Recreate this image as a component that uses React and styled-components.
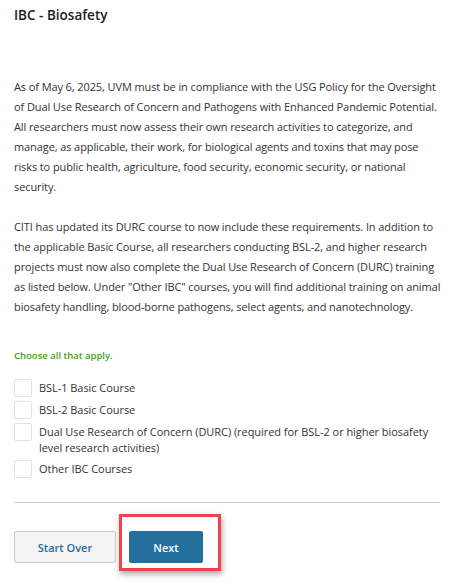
import React from 'react';
import styled, { createGlobalStyle } from 'styled-components';

const GlobalStyle = createGlobalStyle`
    body {
        margin: 0;
        background: #ffffff;
        font-family: "Open Sans", "Liberation Sans", sans-serif;
    }
`;

const Page = styled.div`
    width: 426px;
    padding: 6px 14px 22px;
    color: #333;
`;

const Title = styled.h2`
    margin: 0 0 52px;
    font-size: 13.5px;
    line-height: 19px;
    font-weight: 600;
    color: #222;
`;

const Paragraph = styled.p`
    margin: 0 0 20px;
    font-size: 11px;
    letter-spacing: -0.1px;
    line-height: 20px;
    width: 430px;
`;

const Hint = styled.div`
    margin: 32px 0 16px;
    font-size: 9.5px;
    font-weight: 600;
    line-height: 14px;
    color: #45a018;
`;

const OptionList = styled.div`
    display: flex;
    flex-direction: column;
    gap: 4px;
`;

const Option = styled.label`
    display: flex;
    align-items: flex-start;
    gap: 7px;
    font-size: 11px;
    letter-spacing: -0.05px;
    line-height: 16px;
    color: #333;
    cursor: pointer;
`;

const Box = styled.span`
    flex: none;
    width: 16px;
    height: 16px;
    border: 1px solid #e2e2e2;
    border-radius: 2px;
    background: #fff;
`;

const OptionText = styled.span`
    padding-top: 1px;
    padding-right: 10px;
`;

const Divider = styled.hr`
    margin: 24px 0 28px;
    border: none;
    border-top: 1px solid #cfcfcf;
`;

const Actions = styled.div`
    display: flex;
    gap: 13px;
`;

const Button = styled.button`
    height: 32px;
    padding: 0;
    font-family: inherit;
    font-size: 11px;
    font-weight: 600;
    border-radius: 2px;
    cursor: pointer;
    width: ${p => p.$width}px;
    background: ${p => (p.$primary ? '#236f9e' : '#f4f4f4')};
    color: ${p => (p.$primary ? '#ffffff' : '#2a6d9c')};
    border: 1px solid ${p => (p.$primary ? '#236f9e' : '#cccccc')};
`;

const Highlighted = styled.div`
    position: relative;
`;

// red annotation frame drawn over the Next button
const HighlightBox = styled.div`
    position: absolute;
    left: -10px;
    top: -17px;
    width: 96px;
    height: 51px;
    border: 3px solid #f2434a;
    box-shadow: 1px 3px 6px rgba(0, 0, 0, 0.35);
    pointer-events: none;
`;

const options = [
    'BSL-1 Basic Course',
    'BSL-2 Basic Course',
    'Dual Use Research of Concern (DURC) (required for BSL-2 or higher biosafety level research activities)',
    'Other IBC Courses',
];

const App = () => {
    return (
        <>
            <GlobalStyle />
            <Page>
                <Title>IBC - Biosafety</Title>
                <Paragraph>
                    As of May 6, 2025, UVM must be in compliance with the USG Policy for the Oversight of Dual Use
                    Research of Concern and Pathogens with Enhanced Pandemic Potential. All researchers must now
                    assess their own research activities to categorize, and manage, as applicable, their work, for
                    biological agents and toxins that may pose risks to public health, agriculture, food security,
                    economic security, or national security.
                </Paragraph>
                <Paragraph>
                    CITI has updated its DURC course to now include these requirements. In addition to the applicable
                    Basic Course, all researchers conducting BSL-2, and higher research projects must now also complete
                    the Dual Use Research of Concern (DURC) training as listed below. Under "Other IBC" courses, you
                    will find additional training on animal biosafety handling, blood-borne pathogens, select agents,
                    and nanotechnology.
                </Paragraph>
                <Hint>Choose all that apply.</Hint>
                <OptionList>
                    {options.map(o => (
                        <Option key={o}>
                            <Box />
                            <OptionText>{o}</OptionText>
                        </Option>
                    ))}
                </OptionList>
                <Divider />
                <Actions>
                    <Button $width={102}>Start Over</Button>
                    <Highlighted>
                        <Button $primary $width={74}>Next</Button>
                        <HighlightBox />
                    </Highlighted>
                </Actions>
            </Page>
        </>
    );
};

export default App;
